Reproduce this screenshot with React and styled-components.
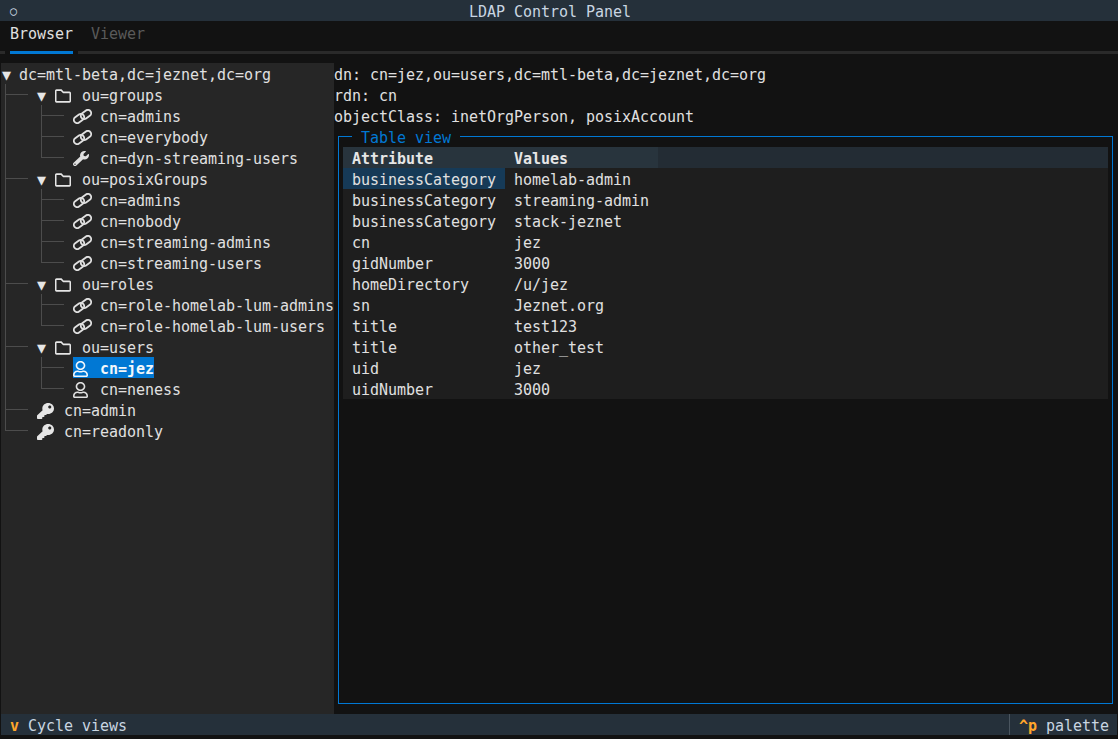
import React from 'react';
import styled, { createGlobalStyle } from 'styled-components';
import { FaWrench, FaKey, FaRegFolder, FaRegUser } from 'react-icons/fa';

const GlobalStyle = createGlobalStyle`
	html, body {
		margin: 0;
		padding: 0;
		height: 100%;
		background: #121212;
		overflow: hidden;
	}
	#root {
		height: 100%;
	}
`;

const Screen = styled.div`
	display: flex;
	flex-direction: column;
	box-sizing: border-box;
	height: 739px;
	width: 1118px;
	padding: 0 1px 4px;
	background: #121212;
	color: #e0e0e0;
	font-family: 'DejaVu Sans Mono', 'Liberation Mono', monospace;
	font-size: 15px;
	letter-spacing: -0.03px;
	line-height: 25px;
	white-space: pre;
`;

const TitleBar = styled.header`
	display: flex;
	height: 21px;
	margin: 0 -1px;
	padding: 0 1px;
	background: #25303a;
	color: #c9d6e2;
`;

const TitleIcon = styled.span`
	width: 27px;
	padding-left: 9px;
	box-sizing: border-box;
	font-size: 12px;
	line-height: 23px;
`;

const TitleText = styled.span`
	flex: 1;
	text-align: center;
	padding-right: 45px;
`;

const TabBar = styled.nav`
	display: flex;
	height: 30px;
	line-height: 27px;
`;

const Tab = styled.span`
	padding: 0 9px;
	color: ${(p) => (p.$active ? '#e0e0e0' : '#5a5a5a')};
`;

const TabRule = styled.div`
	display: flex;
	gap: 5px;
	height: 3px;
	margin: 0 -1px 9px;
`;

const RuleSegment = styled.div`
	width: ${(p) => p.$width || 'auto'};
	flex: ${(p) => (p.$width ? 'none' : 1)};
	background: ${(p) => (p.$active ? '#0178d4' : '#2a2a2a')};
`;

const Body = styled.main`
	display: flex;
	flex: 1;
	min-height: 0;
`;

const TreePane = styled.aside`
	width: 333px;
	flex: none;
	background: #262626;
	overflow: hidden;
`;

const TreeRow = styled.div`
	display: flex;
	height: 21px;
`;

const guideLine = '#4c4c4c';

const Guide = styled.span`
	flex: none;
	width: 36px;
	height: 21px;
	background-repeat: no-repeat;
	background-image:
		linear-gradient(${guideLine}, ${guideLine}),
		linear-gradient(${guideLine}, ${guideLine});
	background-position: 4px 0, 4px 10px;
	background-size:
		1px ${(p) => (p.$kind === 'elbow' ? '11px' : '21px')},
		${(p) => (p.$kind === 'bar' ? '0 0' : '23px 1px')};
`;

const Arrow = styled.span`
	flex: none;
	width: 18px;
	padding-left: ${(p) => (p.$root ? 1 : 0)}px;
	box-sizing: border-box;
	color: #e6e6e6;
`;

const IconSlot = styled.span`
	flex: none;
	display: flex;
	align-items: center;
	width: 27px;
	height: 21px;
	padding-top: 2px;
	box-sizing: border-box;
	color: #e6e6e6;

	svg {
		width: ${(p) => p.$w}px;
		height: ${(p) => p.$h}px;
	}
`;

const Label = styled.span`
	display: flex;
	background: ${(p) => (p.$selected ? '#0178d4' : 'transparent')};
	color: ${(p) => (p.$selected ? '#f2f7fb' : '#e0e0e0')};
	font-weight: ${(p) => (p.$selected ? 700 : 400)};

	${IconSlot} {
		color: inherit;
	}
`;

const DetailPane = styled.section`
	flex: 1;
	display: flex;
	flex-direction: column;
	min-width: 0;
`;

const MetaLine = styled.div`
	height: 21px;
`;

const TableFrame = styled.div`
	position: relative;
	flex: 1;
	display: flex;
	flex-direction: column;
	margin: 10px 4px 10px 4px;
	padding: 10px 4px 0;
	border: 1px solid #0178d4;
`;

const FrameTitle = styled.span`
	position: absolute;
	top: -11px;
	left: 13px;
	height: 21px;
	padding: 0 9px;
	background: #121212;
	color: #0178d4;
`;

const Table = styled.div`
	display: grid;
	grid-template-columns: 162px 153px 1fr;
	grid-auto-rows: 21px;
	background: #1e1e1e;
`;

const HeadCell = styled.div`
	padding: 0 9px;
	background: ${(p) => (p.$filler ? '#232c34' : '#28343d')};
	color: #e6e6e6;
	font-weight: 700;
`;

const Cell = styled.div`
	padding: 0 9px;
	overflow: hidden;
	background: ${(p) => (p.$cursor ? '#163a57' : 'transparent')};
`;

const Footer = styled.footer`
	display: flex;
	height: 21px;
	background: #25303a;
	color: #c9d6e2;
`;

const FooterAction = styled.span`
	padding: 0 9px;
`;

const PaletteAction = styled(FooterAction)`
	margin-left: auto;
	width: 108px;
	box-sizing: border-box;
	border-left: 1px solid #4a555f;
`;

const Key = styled.b`
	color: #ffa62b;
	font-weight: 700;
`;

// chain glyph from the terminal's icon font, two loops hooked together
function ChainIcon() {
	return (
		<svg viewBox="0 0 19 15" fill="none" stroke="currentColor" strokeWidth="1.9">
			<rect x="0.4" y="6.2" width="11.2" height="6.6" rx="3.3" transform="rotate(-36 6 9.5)" />
			<rect x="7.4" y="2.2" width="11.2" height="6.6" rx="3.3" transform="rotate(-36 13 5.5)" />
		</svg>
	);
}

function StretchedIcon({ icon: Icon }) {
	return <Icon preserveAspectRatio="none" />;
}

const link = { icon: ChainIcon, w: 19, h: 15 };
const wrench = { icon: FaWrench, w: 16, h: 15 };
const user = { icon: FaRegUser, w: 15, h: 16 };
const key = { icon: FaKey, w: 17, h: 16 };
const folder = { icon: FaRegFolder, w: 16, h: 18 };

const branches = [
	{
		name: 'ou=groups',
		items: [
			{ name: 'cn=admins', ...link },
			{ name: 'cn=everybody', ...link },
			{ name: 'cn=dyn-streaming-users', ...wrench },
		],
	},
	{
		name: 'ou=posixGroups',
		items: [
			{ name: 'cn=admins', ...link },
			{ name: 'cn=nobody', ...link },
			{ name: 'cn=streaming-admins', ...link },
			{ name: 'cn=streaming-users', ...link },
		],
	},
	{
		name: 'ou=roles',
		items: [
			{ name: 'cn=role-homelab-lum-admins', ...link },
			{ name: 'cn=role-homelab-lum-users', ...link },
		],
	},
	{
		name: 'ou=users',
		items: [
			{ name: 'cn=jez', selected: true, ...user },
			{ name: 'cn=neness', ...user },
		],
	},
];

const rootLeaves = ['cn=admin', 'cn=readonly'];

const attributes = [
	['businessCategory', 'homelab-admin'],
	['businessCategory', 'streaming-admin'],
	['businessCategory', 'stack-jeznet'],
	['cn', 'jez'],
	['gidNumber', '3000'],
	['homeDirectory', '/u/jez'],
	['sn', 'Jeznet.org'],
	['title', 'test123'],
	['title', 'other_test'],
	['uid', 'jez'],
	['uidNumber', '3000'],
];

function Tree() {
	return (
		<TreePane>
			<TreeRow>
				<Arrow $root>▼</Arrow>
				<span>dc=mtl-beta,dc=jeznet,dc=org</span>
			</TreeRow>
			{branches.map((branch) => (
				<React.Fragment key={branch.name}>
					<TreeRow>
						<Guide $kind="tee" />
						<Arrow>▼</Arrow>
						<IconSlot $w={folder.w} $h={folder.h}>
							<StretchedIcon icon={folder.icon} />
						</IconSlot>
						<span>{branch.name}</span>
					</TreeRow>
					{branch.items.map(({ name, icon, w, h, selected }, i) => (
						<TreeRow key={name}>
							<Guide $kind="bar" />
							<Guide $kind={i === branch.items.length - 1 ? 'elbow' : 'tee'} />
							<Label $selected={selected}>
								<IconSlot $w={w} $h={h}>
									<StretchedIcon icon={icon} />
								</IconSlot>
								{name}
							</Label>
						</TreeRow>
					))}
				</React.Fragment>
			))}
			{rootLeaves.map((name, i) => (
				<TreeRow key={name}>
					<Guide $kind={i === rootLeaves.length - 1 ? 'elbow' : 'tee'} />
					<IconSlot $w={key.w} $h={key.h}>
						<StretchedIcon icon={key.icon} />
					</IconSlot>
					<span>{name}</span>
				</TreeRow>
			))}
		</TreePane>
	);
}

function Details() {
	return (
		<DetailPane>
			<MetaLine>dn: cn=jez,ou=users,dc=mtl-beta,dc=jeznet,dc=org</MetaLine>
			<MetaLine>rdn: cn</MetaLine>
			<MetaLine>objectClass: inetOrgPerson, posixAccount</MetaLine>
			<TableFrame>
				<FrameTitle>Table view</FrameTitle>
				<Table>
					<HeadCell>Attribute</HeadCell>
					<HeadCell>Values</HeadCell>
					<HeadCell $filler />
					{attributes.map(([attr, value], i) => (
						<React.Fragment key={i}>
							<Cell $cursor={i === 0}>{attr}</Cell>
							<Cell>{value}</Cell>
							<Cell />
						</React.Fragment>
					))}
				</Table>
			</TableFrame>
		</DetailPane>
	);
}

export default function App() {
	return (
		<Screen>
			<GlobalStyle />
			<TitleBar>
				<TitleIcon>○</TitleIcon>
				<TitleText>LDAP Control Panel</TitleText>
			</TitleBar>
			<TabBar>
				<Tab $active>Browser</Tab>
				<Tab>Viewer</Tab>
			</TabBar>
			<TabRule>
				<RuleSegment $width="5px" />
				<RuleSegment $width="63px" $active />
				<RuleSegment />
			</TabRule>
			<Body>
				<Tree />
				<Details />
			</Body>
			<Footer>
				<FooterAction>
					<Key>v</Key> Cycle views
				</FooterAction>
				<PaletteAction>
					<Key>^p</Key> palette
				</PaletteAction>
			</Footer>
		</Screen>
	);
}
